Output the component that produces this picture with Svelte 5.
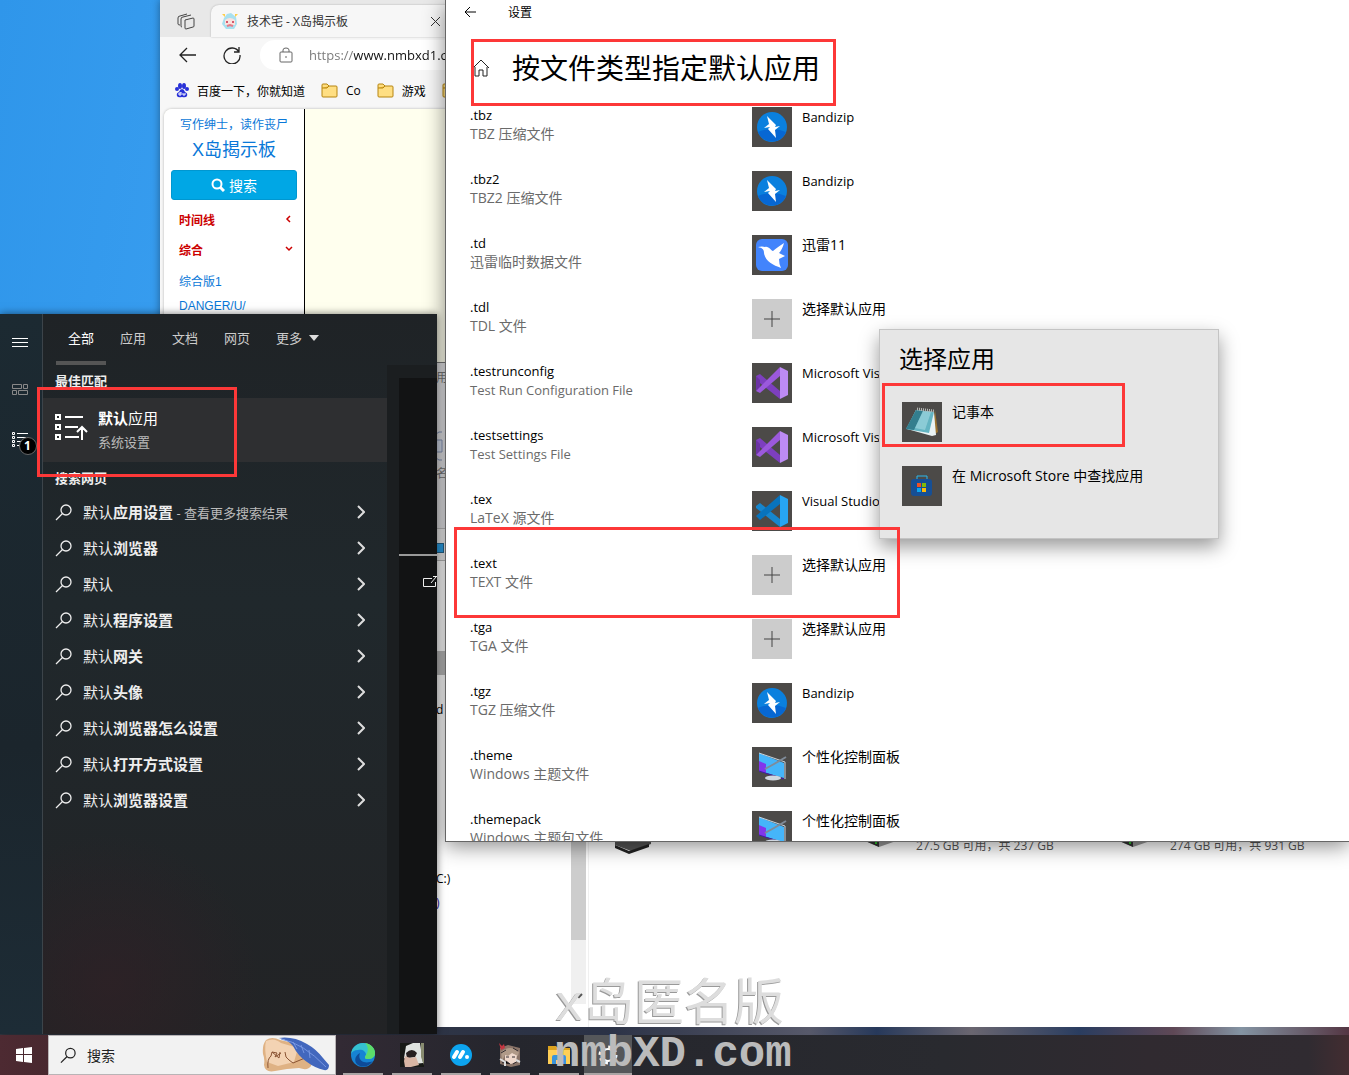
<script>
  const fileTypes = [
    { ext: ".tbz", desc: "TBZ 压缩文件", app: "Bandizip", icon: "bandizip" },
    { ext: ".tbz2", desc: "TBZ2 压缩文件", app: "Bandizip", icon: "bandizip" },
    { ext: ".td", desc: "迅雷临时数据文件", app: "迅雷11", icon: "thunder" },
    { ext: ".tdl", desc: "TDL 文件", app: "选择默认应用", icon: "plus" },
    { ext: ".testrunconfig", desc: "Test Run Configuration File", app: "Microsoft Visual Studio", icon: "vs" },
    { ext: ".testsettings", desc: "Test Settings File", app: "Microsoft Visual Studio", icon: "vs" },
    { ext: ".tex", desc: "LaTeX 源文件", app: "Visual Studio Code", icon: "vscode" },
    { ext: ".text", desc: "TEXT 文件", app: "选择默认应用", icon: "plus" },
    { ext: ".tga", desc: "TGA 文件", app: "选择默认应用", icon: "plus" },
    { ext: ".tgz", desc: "TGZ 压缩文件", app: "Bandizip", icon: "bandizip" },
    { ext: ".theme", desc: "Windows 主题文件", app: "个性化控制面板", icon: "theme" },
    { ext: ".themepack", desc: "Windows 主题包文件", app: "个性化控制面板", icon: "theme" },
  ];

  const suggestions = [
    { text: "应用设置", hint: " - 查看更多搜索结果" },
    { text: "浏览器" },
    { text: "" },
    { text: "程序设置" },
    { text: "网关" },
    { text: "头像" },
    { text: "浏览器怎么设置" },
    { text: "打开方式设置" },
    { text: "浏览器设置" },
  ];

  const tabs = ["全部", "应用", "文档", "网页"];
  const drives = ["27.5 GB 可用，共 237 GB", "274 GB 可用，共 931 GB"];
  const taskApps = ["edge", "photo", "mumu", "game", "folder", "gear"];

  let activeTab = $state("全部");
  let address = $state("https://www.nmbxd1.com");
  let query = $state("");

  const isLatin = (text) => /^[ -~]+$/.test(text);
</script>

{#snippet appIcon(name)}
  <svg class="app-icon" class:empty={name === "plus"} viewBox="0 0 40 40" aria-hidden="true">
    {#if name === "bandizip"}
      <circle cx="20" cy="20" r="15" fill="#0a80de" />
      <path d="M6 25a15 15 0 0 0 28 0q-14-6-28 0" fill="#0767d3" />
      <path d="M15 9l9 9-1 2 5-1-5 4 1 8-8-9 2-2-6 1 5-4z" fill="#fff" />
    {:else if name === "thunder"}
      <rect x="4" y="4" width="32" height="32" rx="6" fill="#4284fc" />
      <path
        d="M6 12q4-1 7 0c4-1 6 4 8 4 3-3 7-5 11-8-1 4-3 8-5 10l6 3-6 3q0 5 2 9c-8-3-16-7-17-15 0-4-2-5-6-6"
        fill="#fff"
      />
    {:else if name === "plus"}
      <path d="M20 12v16M12 20h16" stroke="#444" stroke-width="1" />
    {:else if name === "vs"}
      <path d="M4 13l4-2 20 17v8L4 17z" fill="#7d3fbf" />
      <path d="M4 13l4 4v8l-4 3z" fill="#6b33a4" />
      <path d="M4 28l24-24v9L8 30z" fill="#9b59dc" />
      <path d="M28 4l8 4v24l-8 4z" fill="#bd8bf4" />
    {:else if name === "vscode"}
      <path d="M4 15l4-3 20 16v8L4 17z" fill="#1686ce" />
      <path d="M4 25L28 4v9L8 29z" fill="#0873bd" />
      <path d="M28 4l8 4v24l-8 4z" fill="#27a5f2" />
    {:else if name === "theme"}
      <path d="M7 6l25 10v15L7 24z" fill="#45b5fa" />
      <path d="M7 14l7 3v9l-7-2z" fill="#8136ec" />
      <path d="M7 6l26 9v17" fill="none" stroke="#c8d4dd" />
      <path d="M7 24l25 8" stroke="#4118a8" />
      <path d="M13 22l9-5 12-7" fill="none" stroke="#7f8b99" stroke-width="2" />
      <ellipse cx="21" cy="31" rx="8" ry="2.500" fill="#d0d7df" />
    {:else if name === "notepad"}
      <path d="M33 8l3 22-6 4z" fill="#9c7330" />
      <path d="M14 8l18 2 2 23-4 1-25-7z" fill="#e9f2f4" />
      <path d="M14 8l18 2-5 21-23-4z" fill="#63b4c2" />
      <path d="M14 8l7 1-9 19-8-1z" fill="#337e8e" />
      <path d="M21 9l8 1-6 18-10-2z" fill="#a7dbe2" opacity=".6" />
      <path d="M15 7l17 2" stroke="#b8bbb8" stroke-width="3" stroke-dasharray="1 1" />
    {:else if name === "store"}
      <path d="M15 14v-4h10v4" fill="none" stroke="#28b8ee" />
      <rect x="9" y="13" width="21" height="17" rx="3" fill="#164f95" />
      <path d="M15 17h4v4h-4z" fill="#f15022" />
      <path d="M20 17h4v4h-4z" fill="#80bb08" />
      <path d="M15 22h4v4h-4z" fill="#0ba4ef" />
      <path d="M20 22h4v4h-4z" fill="#ffba08" />
    {/if}
  </svg>
{/snippet}

{#snippet folder()}
  <svg class="folder" viewBox="0 0 17 15" aria-hidden="true">
    <path d="M1 3V2q0-1 1-1h4l2 2h7q1 0 1 1v9q0 1-1 1H2q-1 0-1-1z" fill="#ffdf83" stroke="#b68510" />
    <path d="M1 5h5l2-2" fill="#edb72d" stroke="#b68510" />
  </svg>
{/snippet}

<div class="screen">
  <main class="desktop">
    <section class="window browser">
      <div class="tab-strip">
        <svg width="18" height="17" viewBox="0 0 18 17" fill="none" stroke="#444" aria-hidden="true">
          <path d="M8 7l8-2q1 0 1 1v7q0 1-1 1l-7 2q-1 0-1-1z" />
          <path d="M5 14q-1 0-1-1V6q0-2 2-2l8-2M3 12q-2 0-2-1V5q0-2 2-2l7-2" />
        </svg>
        <div class="browser-tab">
          <svg width="18" height="18" viewBox="0 0 18 18" aria-hidden="true">
            <path d="M3 6l3-4 4-1 5 4 1 7-3 5H5l-4-5z" fill="#a8e0ef" />
            <path d="M4 8q5-4 10 0v5H4z" fill="#fae2de" />
            <path d="M5 10h2M11 10h2" stroke="#d5586b" stroke-width="2" />
            <path d="M6 14l3-1 3 1" stroke="#e77a87" fill="none" stroke-width="2" />
            <path d="M1 2h3v3M17 2h-3v3" fill="#ffce49" />
          </svg>
          <span>技术宅 - X岛揭示板</span>
          <button class="plain" aria-label="关闭标签页">
            <svg width="9" height="9" viewBox="0 0 9 9" stroke="#333" aria-hidden="true"><path d="M0 0l9 9M9 0L0 9" /></svg>
          </button>
        </div>
      </div>
      <div class="toolbar">
        <button class="plain" aria-label="后退">
          <svg width="18" height="16" viewBox="0 0 18 16" fill="none" stroke="#222" stroke-width="1.3" aria-hidden="true"><path d="M17 8H1M8 1L1 8l7 7" /></svg>
        </button>
        <button class="plain" aria-label="刷新">
          <svg width="18" height="18" viewBox="0 0 18 18" fill="none" stroke="#222" stroke-width="1.3" aria-hidden="true">
            <path d="M16 6a8 8 0 1 0 1 3M16 1v5h-5" />
          </svg>
        </button>
        <div class="address">
          <svg width="14" height="16" viewBox="0 0 14 16" fill="none" stroke="#666" aria-hidden="true">
            <rect x="1" y="5" width="12" height="10" rx="1" />
            <path d="M4 5V3q0-2 3-2t3 2v2M7 9v2" />
          </svg>
          <input aria-label="地址" bind:value={address} />
        </div>
      </div>
      <nav class="bookmarks">
        <a href="#baidu">
          <svg width="14" height="15" viewBox="0 0 14 15" fill="#2931d7" aria-hidden="true">
            <ellipse cx="5" cy="3" rx="2" ry="3" /><ellipse cx="9" cy="3" rx="2" ry="3" />
            <ellipse cx="2" cy="6" rx="2" ry="2" /><ellipse cx="12" cy="6" rx="2" ry="2" />
            <path d="M7 6q2 0 3 3 3 1 2 4-1 2-5 1-4 1-5-1-1-3 2-4 1-3 3-3" />
            <path d="M6 9v3H4v-2h2M8 10v2h2v-2" fill="none" stroke="#fff" />
          </svg>
          百度一下，你就知道
        </a>
        <a href="#co">{@render folder()}Co</a>
        <a href="#games">{@render folder()}游戏</a>
        <a href="#more" aria-label="更多书签">{@render folder()}</a>
      </nav>
      <div class="page">
        <aside class="board">
          <a class="slogan" href="#top">写作绅士，读作丧尸</a>
          <a class="site" href="#home">X岛揭示板</a>
          <button class="board-search">
            <svg width="14" height="14" viewBox="0 0 14 14" fill="none" stroke="#fff" stroke-width="2" aria-hidden="true">
              <circle cx="6" cy="6" r="4.500" /><path d="M9 9l4 4" stroke-width="3" />
            </svg>
            搜索
          </button>
          <a class="group" href="#timeline">
            时间线
            <svg width="8" height="8" viewBox="0 0 8 8" fill="none" stroke="#c00" stroke-width="1.5" aria-hidden="true"><path d="M5 1L2 4l3 3" /></svg>
          </a>
          <a class="group" href="#general">
            综合
            <svg width="8" height="8" viewBox="0 0 8 8" fill="none" stroke="#c00" stroke-width="1.5" aria-hidden="true"><path d="M1 2l3 3 3-3" /></svg>
          </a>
          <div class="sub">
            <a href="#b1">综合版1</a>
            <a href="#danger">DANGER/U/</a>
          </div>
        </aside>
      </div>
    </section>

    <section class="window explorer">
      <div class="tree">
        <div class="ribbon">
          <span>用</span>
          <svg width="8" height="30" viewBox="0 0 8 30" fill="#d4dceb" stroke="#8494b5" aria-hidden="true">
            <path d="M0 3l3-2h3M0 27l3 2h3M1 9h5v12H1" />
          </svg>
          <span>名</span>
        </div>
        <div class="address-row"><i></i></div>
        <div class="tree-body">
          <i class="selected"></i>
          <span>d</span>
        </div>
        <div class="tree-end">
          <span>C:)</span>
          <span class="link">)</span>
        </div>
      </div>
      <div class="scrollbar">
        <div class="thumb"></div>
        <svg width="8" height="6" viewBox="0 0 8 6" fill="none" stroke="#555" stroke-width="2" aria-hidden="true"><path d="M1 1l3 3 3-3" /></svg>
      </div>
      <div class="drives">
        <svg class="drive" viewBox="0 0 36 12" aria-hidden="true"><path d="M0 3l16 6L36 2V0H0z" fill="#555" /><path d="M0 3l14 6 20-7v3l-20 7L0 6z" fill="#222" /></svg>
        {#each drives as drive}
          <div class="drive-item">
            <svg class="drive" viewBox="0 0 36 12" aria-hidden="true">
              <path d="M0 3l16 7 20-7V0H0z" fill="#999" />
              <path d="M0 0v3l16 7V0z" fill="#333" />
              <path d="M12 5h2v2h-2z" fill="#2ac52a" />
            </svg>
            <span>{drive}</span>
          </div>
        {/each}
      </div>
    </section>

    <section class="window settings">
      <header>
        <button class="plain" aria-label="返回">
          <svg width="12" height="12" viewBox="0 0 12 12" fill="none" stroke="#000" aria-hidden="true"><path d="M12 6H1M6 1L1 6l5 5" /></svg>
        </button>
        <span>设置</span>
      </header>
      <div class="heading">
        <svg width="18" height="18" viewBox="0 0 18 18" fill="none" stroke="#222" aria-hidden="true">
          <path d="M1 9l8-8 8 8M3 8v9h4v-6h4v6h4V8" />
        </svg>
        <h1>按文件类型指定默认应用</h1>
      </div>
      <ul class="types">
        {#each fileTypes as type}
          <li>
            <div>
              <div class="ext">{type.ext}</div>
              <div class="desc" class:latin={isLatin(type.desc)}>{type.desc}</div>
            </div>
            <button class="plain app">
              {@render appIcon(type.icon)}
              <span class:latin={isLatin(type.app)}>{type.app}</span>
            </button>
          </li>
        {/each}
      </ul>
    </section>

    <section class="picker">
      <h2>选择应用</h2>
      <button class="plain app">
        {@render appIcon("notepad")}
        <span>记事本</span>
      </button>
      <button class="plain app">
        {@render appIcon("store")}
        <span>在 Microsoft Store 中查找应用</span>
      </button>
    </section>

    <section class="search-panel">
      <div class="rail">
        <svg width="16" height="10" viewBox="0 0 16 10" stroke="#fff" aria-hidden="true"><path d="M0 .5h16M0 4.500h16M0 8.500h16" /></svg>
        <svg width="16" height="12" viewBox="0 0 16 12" fill="none" stroke="#888" aria-hidden="true">
          <path d="M.5.5h9v4h-9zM11.500.5h4v4h-4zM.5 6.500h4v4h-4zM6.500 6.500h9v4h-9z" />
        </svg>
        <div class="list-icon">
          <svg width="16" height="16" viewBox="0 0 16 16" fill="none" stroke="#fff" aria-hidden="true">
            <path d="M.5.5h2v2h-2zM.5 4.500h2v2h-2zM.5 8.500h2v2h-2zM.5 12.500h2v2h-2zM5 1.500h11M5 5.500h9M5 9.500h6M5 13.500h4" />
          </svg>
          <span class="badge">1</span>
        </div>
      </div>
      <div class="results">
        <div class="filters">
          {#each tabs as tab}
            <button class="plain" class:active={activeTab === tab} onclick={() => (activeTab = tab)}>{tab}</button>
          {/each}
          <button class="plain more">
            更多
            <svg width="10" height="6" viewBox="0 0 10 6" fill="#ddd" aria-hidden="true"><path d="M0 0h10L5 6z" /></svg>
          </button>
        </div>
        <div class="columns">
          <div class="matches">
            <h3>最佳匹配</h3>
            <button class="plain best">
              <svg width="33" height="28" viewBox="0 0 33 28" fill="none" stroke="#fff" stroke-width="2" aria-hidden="true">
                <path d="M1 2h4v4H1zM1 12h4v4H1zM1 22h4v4H1zM10 4h18M10 14h13M10 24h14M27 27V15M22 19l5-5 5 5" />
              </svg>
              <span>
                <span class="best-title"><b>默认</b>应用</span>
                <span class="best-kind">系统设置</span>
              </span>
            </button>
            <h3>搜索网页</h3>
            {#each suggestions as item}
              <button class="plain suggestion">
                <svg width="18" height="17" viewBox="0 0 18 17" fill="none" stroke="#eee" stroke-width="1.3" aria-hidden="true">
                  <circle cx="11" cy="6" r="5" /><path d="M7.500 9.500L1 16" />
                </svg>
                <span class="words">默认<b>{item.text}</b><small>{item.hint ?? ""}</small></span>
                <svg width="8" height="14" viewBox="0 0 8 14" fill="none" stroke="#ddd" stroke-width="2" aria-hidden="true"><path d="M1 1l6 6-6 6" /></svg>
              </button>
            {/each}
          </div>
          <div class="preview">
            <svg width="14" height="12" viewBox="0 0 14 12" fill="none" stroke="#eee" aria-hidden="true">
              <path d="M9 2.500H.5v8h12V6M8 7l5-6M10 .5h4" />
            </svg>
          </div>
        </div>
      </div>
    </section>

    <div class="mark title-mark"></div>
    <div class="mark text-mark"></div>
    <div class="mark picker-mark"></div>
    <div class="mark best-mark"></div>
  </main>

  <footer class="taskbar">
    <button class="plain start" aria-label="开始">
      <svg width="16" height="16" viewBox="0 0 16 16" fill="#fff" aria-hidden="true">
        <path d="M0 2l7-1v6H0zM8 1l8-1v7H8zM0 8h7v7l-7-1zM8 8h8v8l-8-1z" />
      </svg>
    </button>
    <label class="search-box">
      <svg width="17" height="17" viewBox="0 0 18 17" fill="none" stroke="#222" stroke-width="1.3" aria-hidden="true">
        <circle cx="11" cy="6" r="5" /><path d="M7.500 9.500L1 16" />
      </svg>
      <input placeholder="搜索" aria-label="搜索" bind:value={query} />
      <svg width="68" height="36" viewBox="0 0 68 36" aria-hidden="true">
        <path d="M4 3q6-4 14 0l18 4 10 12q6 3 3 10-3 5-12 2l-12 1-12 2q-10 2-11-6 1-6-1-11-1-9 3-14" fill="#dfb284" />
        <path d="M4 4q8-4 15 2l17 5-4 14-16 4-11-4q-3-14-1-21" fill="#f3d3b3" />
        <path d="M6 31q-1-9 3-12l1-4 5 1-2 4 6-4M10 15l7 6 1-6M23 15q0 6 4 8l4 3 12-5 6 5" fill="none" stroke="#8a5434" />
        <path d="M17 1q14-2 28 6 9 5 16 14l6 7q0 6-5 5-9-2-17-8Q36 19 31 9 25 2 17 1" fill="#4267bd" />
        <path d="M19 2q22 4 45 28M31 5l4 7M39 8l3 8M47 13l1 8" fill="none" stroke="#7796e2" />
      </svg>
    </label>
    <div class="tasks">
      {#each taskApps as app}
        <button class="plain task" class:current={app === "gear"} aria-label={app}>
          <svg width="24" height="24" viewBox="0 0 24 24" aria-hidden="true">
            {#if app === "edge"}
              <circle cx="12" cy="12" r="12" fill="#1683d3" />
              <path d="M0 11C1 4 6 0 12 0c7 0 12 5 12 10 0 4-3 6-7 6-3 0-4-1-2-4 0-4-4-6-8-5-4 0-6 2-7 4" fill="#35c1d0" />
              <path d="M14 0c6 1 10 5 10 10 0 4-3 6-7 6-3 0-4-1-2-4 3-4 2-9-1-12" fill="#5cdc6a" />
              <path d="M9 10c-3 7 4 12 13 8-4 6-12 8-17 2-2-4 0-8 4-10" fill="#0e4b98" />
            {:else if app === "photo"}
              <path d="M0 0h24v24H0z" fill="#171916" />
              <path d="M6 3l7-3h7l3 20-9 1-10-6z" fill="#dfe3e0" />
              <path d="M6 10q6-6 11 0l-2 4-8 1z" fill="#26201f" />
              <path d="M5 13l5 2 6-1 3 8-8 2H5l-1-6z" fill="#d9b6a4" />
              <path d="M21 0h3v22l-3-8z" fill="#888b70" />
            {:else if app === "mumu"}
              <circle cx="12" cy="12" r="11" fill="#0da4ef" />
              <path d="M5 14l3-5M11 14l3-5" stroke="#fff" stroke-width="4" stroke-linecap="round" />
              <circle cx="18" cy="14" r="2" fill="#fff" />
            {:else if app === "game"}
              <path d="M2 5l8-3 12 3v17l-9 2-11-3z" fill="#8a7468" />
              <path d="M7 11l6-2 6 3-1 7-5 2-6-2z" fill="#f0d9cc" />
              <path d="M3 9q9-8 18 0l-1 4-6-3-4 3-3-1-3 6z" fill="#b09a88" />
              <path d="M1 0l3 3 2-2 1 4-4 2z" fill="#c43641" />
              <path d="M8 14h3M14 14h3M3 10l5-3M15 5l5 3M4 20l4-2 4 3M15 21l5-3" stroke="#322c30" />
              <path d="M2 16l5 3v4M18 17l4 2" stroke="#ddd" fill="none" stroke-width="2" />
            {:else if app === "folder"}
              <path d="M1 3h8l2 2h12v15H1z" fill="#dda31f" />
              <path d="M1 7h22v14H1z" fill="#ffcf56" />
              <path d="M5 21v-7q0-2 2-2h10q2 0 2 2v7h-4v-4H9v4z" fill="#3b94dc" />
            {:else}
              <circle cx="12" cy="12" r="6" fill="none" stroke="#fff" stroke-width="2" />
              <circle cx="12" cy="12" r="8" fill="none" stroke="#fff" stroke-width="3" stroke-dasharray="3 3.280" />
            {/if}
          </svg>
        </button>
      {/each}
    </div>
  </footer>

  <div class="watermark">
    <span>x岛匿名版</span>
    <span class="domain">nmbXD.com</span>
  </div>
</div>

<style>
  :global(body) {
    margin: 0;
  }

  .screen {
    position: relative;
    display: flex;
    flex-direction: column;
    height: 100vh;
    overflow: hidden;
    font-family: "Open Sans", "Noto Sans CJK SC", sans-serif;
    font-size: 14px;
    color: #000;
  }
  .screen * {
    box-sizing: border-box;
  }

  .desktop {
    position: relative;
    flex: 1;
    overflow: hidden;
    background:
      linear-gradient(90deg, #343a45, #2b3246 45%, #57596a 60%, #27395b 65%, #6a6670 72%, #2a3d60 80%, #5f4856 87%, #8494a3 92%, #543643) bottom / 100% 12px no-repeat,
      linear-gradient(100deg, #2f96ea, #3fa3f4 30%);
  }

  svg {
    flex: none;
    display: block;
  }
  a {
    text-decoration: none;
  }
  h1,
  h2,
  h3 {
    margin: 0;
    font-weight: 400;
  }
  .plain {
    border: 0;
    padding: 0;
    background: none;
    font: inherit;
    color: inherit;
    text-align: left;
  }
  .window {
    position: absolute;
    overflow: hidden;
  }

  /* browser */
  .browser {
    left: 160px;
    top: 0;
    width: 300px;
    height: 362px;
    display: flex;
    flex-direction: column;
    background: #f7f7f7;
    font-size: 12px;
    box-shadow: 0 0 8px #0006;
  }
  .tab-strip {
    display: flex;
    gap: 16px;
    height: 37px;
    padding: 5px 0 0 17px;
    align-items: center;
    background: #e8e8e8;
  }
  .browser-tab {
    display: flex;
    align-items: center;
    gap: 8px;
    flex: 1;
    height: 32px;
    padding-left: 10px;
    border-radius: 8px 0 0 0;
    background: #f7f7f7;
    box-shadow: 0 0 2px #0004;
    color: #333;
  }
  .browser-tab span {
    width: 176px;
  }
  .toolbar {
    display: flex;
    align-items: center;
    gap: 26px;
    height: 36px;
    padding-left: 19px;
  }
  .address {
    display: flex;
    align-items: center;
    gap: 16px;
    flex: 1;
    height: 30px;
    margin-left: -7px;
    padding-left: 19px;
    border-radius: 15px 0 0 15px;
    background: #fff;
  }
  .address input {
    flex: 1;
    min-width: 0;
    border: 0;
    padding: 0;
    outline: 0;
    font: 13px "Open Sans", sans-serif;
    color: transparent;
    background: linear-gradient(90deg, #777 45px, #111 45px);
    background-clip: text;
  }
  .bookmarks {
    display: flex;
    align-items: center;
    gap: 16px;
    height: 35px;
    padding-left: 15px;
  }
  .bookmarks a {
    display: flex;
    align-items: center;
    gap: 8px;
    white-space: nowrap;
    color: #000;
  }
  .folder {
    width: 17px;
    height: 15px;
  }
  .page {
    flex: 1;
    margin: 1px 0 0 4px;
    border-radius: 8px 0 0 0;
    background: #ffffee;
    box-shadow: 0 0 3px #0004;
    overflow: hidden;
  }
  .board {
    display: flex;
    flex-direction: column;
    width: 141px;
    height: 100%;
    padding: 6px 7px;
    border-right: 1px solid #000;
    background: #fff;
    font-family: "Liberation Sans", "Noto Sans CJK SC", sans-serif;
  }
  .board a {
    color: #0a78d8;
  }
  .slogan {
    text-align: center;
    line-height: 20px;
  }
  .board .site {
    margin-bottom: 4px;
    text-align: center;
    font-size: 18px;
    line-height: 31px;
  }
  .board-search {
    display: flex;
    align-items: center;
    justify-content: center;
    gap: 4px;
    height: 30px;
    margin-bottom: 4px;
    padding-bottom: 2px;
    border: 1px solid #0097d0;
    border-radius: 3px;
    background: #00a7e5;
    color: #fff;
    font-family: inherit;
    font-size: 14px;
  }
  .board .group {
    display: flex;
    align-items: center;
    justify-content: space-between;
    height: 30px;
    padding: 0 4px 0 8px;
    color: #c00;
    font-weight: 700;
  }
  .sub {
    display: flex;
    flex-direction: column;
    padding: 6px 8px;
    line-height: 24px;
  }

  /* file explorer */
  .explorer {
    left: 436px;
    right: 0;
    top: 362px;
    bottom: 8px;
    display: flex;
    background: #fff;
    border-top: 1px solid #777;
    font-size: 12px;
  }
  .tree {
    display: flex;
    flex: none;
    flex-direction: column;
    width: 135px;
  }
  .ribbon {
    height: 165px;
    padding-top: 6px;
    background: #e2e2e5;
    color: #777;
    line-height: 18px;
  }
  .ribbon svg {
    margin: 44px 0 4px;
  }
  .address-row {
    height: 33px;
    padding-top: 14px;
    border-top: 1px solid #bbb;
    border-bottom: 1px solid #bbb;
    background: #eee;
  }
  .address-row i {
    display: block;
    width: 8px;
    height: 10px;
    border: 1px solid #27658c;
    background: #2aa1e8;
  }
  .tree-body {
    flex: 1;
    padding-top: 90px;
  }
  .selected {
    display: block;
    height: 24px;
    margin-bottom: 26px;
    background: #bcbcbc;
  }
  .tree-end {
    display: flex;
    flex-direction: column;
    height: 160px;
    line-height: 24px;
  }
  .link {
    color: #2a1ba0;
  }
  .scrollbar {
    display: flex;
    flex: none;
    flex-direction: column;
    justify-content: space-between;
    align-items: center;
    width: 15px;
    margin-bottom: 23px;
    padding-bottom: 5px;
    background: #f0f0f0;
  }
  .thumb {
    width: 100%;
    height: 577px;
    background: #cdcdcd;
  }
  .drives {
    display: flex;
    align-items: flex-end;
    flex: 1;
    margin-left: 2px;
    padding: 0 0 173px 26px;
    border-left: 1px solid #f0f0f0;
    color: #555;
    white-space: nowrap;
  }
  .drives > svg {
    margin-right: 212px;
  }
  .drive {
    width: 36px;
    height: 12px;
  }
  .drive-item {
    display: flex;
    flex: none;
    gap: 17px;
    width: 254px;
    line-height: 17px;
  }

  /* settings */
  .settings {
    left: 445px;
    right: 0;
    top: 0;
    bottom: 193px;
    border-left: 1px solid #666;
    border-bottom: 1px solid #666;
    background: #fff;
    box-shadow: 0 4px 20px #0007;
  }
  .settings header {
    display: flex;
    align-items: center;
    gap: 32px;
    height: 24px;
    padding-left: 18px;
    font-size: 12px;
  }
  .heading {
    display: flex;
    align-items: center;
    gap: 22px;
    height: 83px;
    padding: 5px 0 0 26px;
  }
  .heading h1 {
    font-size: 28px;
    line-height: 40px;
  }
  .types {
    list-style: none;
    margin: 0;
    padding: 0 0 0 24px;
  }
  .types li {
    display: grid;
    grid-template-columns: 282px 1fr;
    height: 64px;
    line-height: 18px;
    white-space: nowrap;
  }
  .ext {
    margin-bottom: 2px;
    font-size: 13px;
    line-height: 16px;
  }
  .desc {
    color: #6a6a6a;
  }
  .latin {
    font-size: 13px;
  }
  .app {
    display: flex;
    align-items: flex-start;
    gap: 10px;
    height: 40px;
    line-height: 20px;
  }
  .app-icon {
    width: 40px;
    height: 40px;
    background: #4c4a48;
  }
  .app-icon.empty {
    background: #ccc;
  }

  .picker {
    position: absolute;
    left: 879px;
    top: 329px;
    width: 340px;
    height: 210px;
    display: flex;
    flex-direction: column;
    gap: 24px;
    padding: 11px 22px;
    border: 1px solid #c4c4c4;
    background: #e6e6e6;
    box-shadow: 0 8px 18px #0006;
  }
  .picker h2 {
    margin-left: -3px;
    padding-bottom: 2px;
    font-size: 24px;
    line-height: 35px;
  }

  /* start menu search */
  .search-panel {
    position: absolute;
    left: 0;
    top: 314px;
    bottom: 1px;
    width: 437px;
    display: flex;
    background:
      radial-gradient(circle at 110px 670px, #33202699, #0000 150px),
      linear-gradient(#1f2326, #20282c 40%, #222325);
    box-shadow: 0 0 8px #0008;
    color: #eee;
  }
  .rail {
    display: flex;
    flex-direction: column;
    align-items: center;
    gap: 36px;
    width: 43px;
    padding: 24px 3px 0 0;
    border-right: 1px solid #3c444a;
    background: linear-gradient(#1c2a32, #1b252c 60%, #1d2c36);
  }
  .list-icon {
    position: relative;
  }
  .badge {
    position: absolute;
    left: 7px;
    top: 5px;
    width: 18px;
    height: 18px;
    border: 1px solid #666;
    border-radius: 9px;
    background: #000;
    color: #fff;
    font-size: 12px;
    font-weight: 700;
    line-height: 16px;
    text-align: center;
  }
  .results {
    display: flex;
    flex-direction: column;
    flex: 1;
  }
  .filters {
    display: flex;
    gap: 2px;
    height: 51px;
    padding-left: 13px;
    font-size: 13px;
    color: #ccc;
  }
  .filters button {
    width: 50px;
    border-bottom: 4px solid transparent;
    text-align: center;
  }
  .filters .active {
    border-color: #555;
    color: #fff;
  }
  .filters .more {
    display: flex;
    align-items: center;
    gap: 7px;
    margin-left: 12px;
  }
  .columns {
    display: flex;
    flex: 1;
  }
  .matches {
    width: 344px;
  }
  .matches h3 {
    height: 32px;
    padding-left: 12px;
    font-size: 13px;
    font-weight: 700;
    line-height: 32px;
  }
  .best {
    display: flex;
    align-items: center;
    gap: 10px;
    width: 100%;
    height: 64px;
    margin-top: 1px;
    padding: 0 0 6px 12px;
    background: #2e2f31;
  }
  .best > span {
    padding-top: 6px;
  }
  .best span span {
    display: block;
    line-height: 24px;
  }
  .best .best-title {
    font-size: 15px;
    color: #fff;
  }
  .best .best-kind {
    font-size: 13px;
    color: #bbb;
  }
  .suggestion {
    display: flex;
    align-items: center;
    gap: 10px;
    width: 100%;
    height: 36px;
    padding: 0 22px 0 12px;
    font-size: 15px;
  }
  .words {
    flex: 1;
    padding-bottom: 2px;
    white-space: pre;
  }
  .words small {
    font-size: 13px;
    color: #bbb;
  }
  .preview {
    flex: 1;
    padding: 198px 0 0 24px;
    border-left: 12px solid #1b1e20;
    border-top: 13px solid #1b1e20;
    background: linear-gradient(#999, #999) 0 176px / 100% 2px no-repeat #121314;
  }

  .mark {
    position: absolute;
    border: 3px solid #fd3838;
    pointer-events: none;
  }
  .title-mark {
    left: 471px;
    top: 39px;
    width: 365px;
    height: 67px;
  }
  .text-mark {
    left: 454px;
    top: 527px;
    width: 446px;
    height: 91px;
  }
  .picker-mark {
    left: 882px;
    top: 383px;
    width: 243px;
    height: 64px;
  }
  .best-mark {
    left: 37px;
    top: 387px;
    width: 200px;
    height: 90px;
  }

  /* taskbar */
  .taskbar {
    display: flex;
    height: 40px;
    background: linear-gradient(90deg, #4d2a32, #48282f 48px, #322a34 340px, #25262d 500px, #292a2f 70%, #302a30 85%, #302b31 97%, #432d31);
  }
  .start {
    display: flex;
    align-items: center;
    justify-content: center;
    width: 48px;
  }
  .search-box {
    display: flex;
    align-items: center;
    gap: 10px;
    width: 288px;
    padding: 0 5px 0 11px;
    border: 1px solid #b9b4b6;
    background: #f2f2f2;
  }
  .search-box input {
    flex: 1;
    min-width: 0;
    border: 0;
    padding: 0;
    outline: 0;
    background: none;
    font: 14px "Open Sans", "Noto Sans CJK SC", sans-serif;
  }
  .search-box input::placeholder {
    color: #222;
  }
  .tasks {
    display: flex;
    gap: 1px;
    margin-left: 3px;
  }
  .task {
    display: flex;
    align-items: center;
    justify-content: center;
    width: 48px;
    background: linear-gradient(#aaa5a5, #aaa5a5) bottom / 40px 2px no-repeat;
  }
  .task.current {
    background: linear-gradient(#aaa5a5, #aaa5a5) bottom / 48px 2px no-repeat #55575a;
  }

  .watermark {
    position: absolute;
    left: 554px;
    bottom: 0;
    display: flex;
    flex-direction: column;
    font-family: "Liberation Mono", "Noto Sans CJK SC", monospace;
    font-size: 50px;
    line-height: 52px;
    color: #ddd;
    text-shadow: -1px 1px #999;
    pointer-events: none;
  }
  .domain {
    font-size: 44px;
    font-weight: 700;
    line-height: 42px;
    color: #bbb;
    text-shadow: none;
  }
</style>
